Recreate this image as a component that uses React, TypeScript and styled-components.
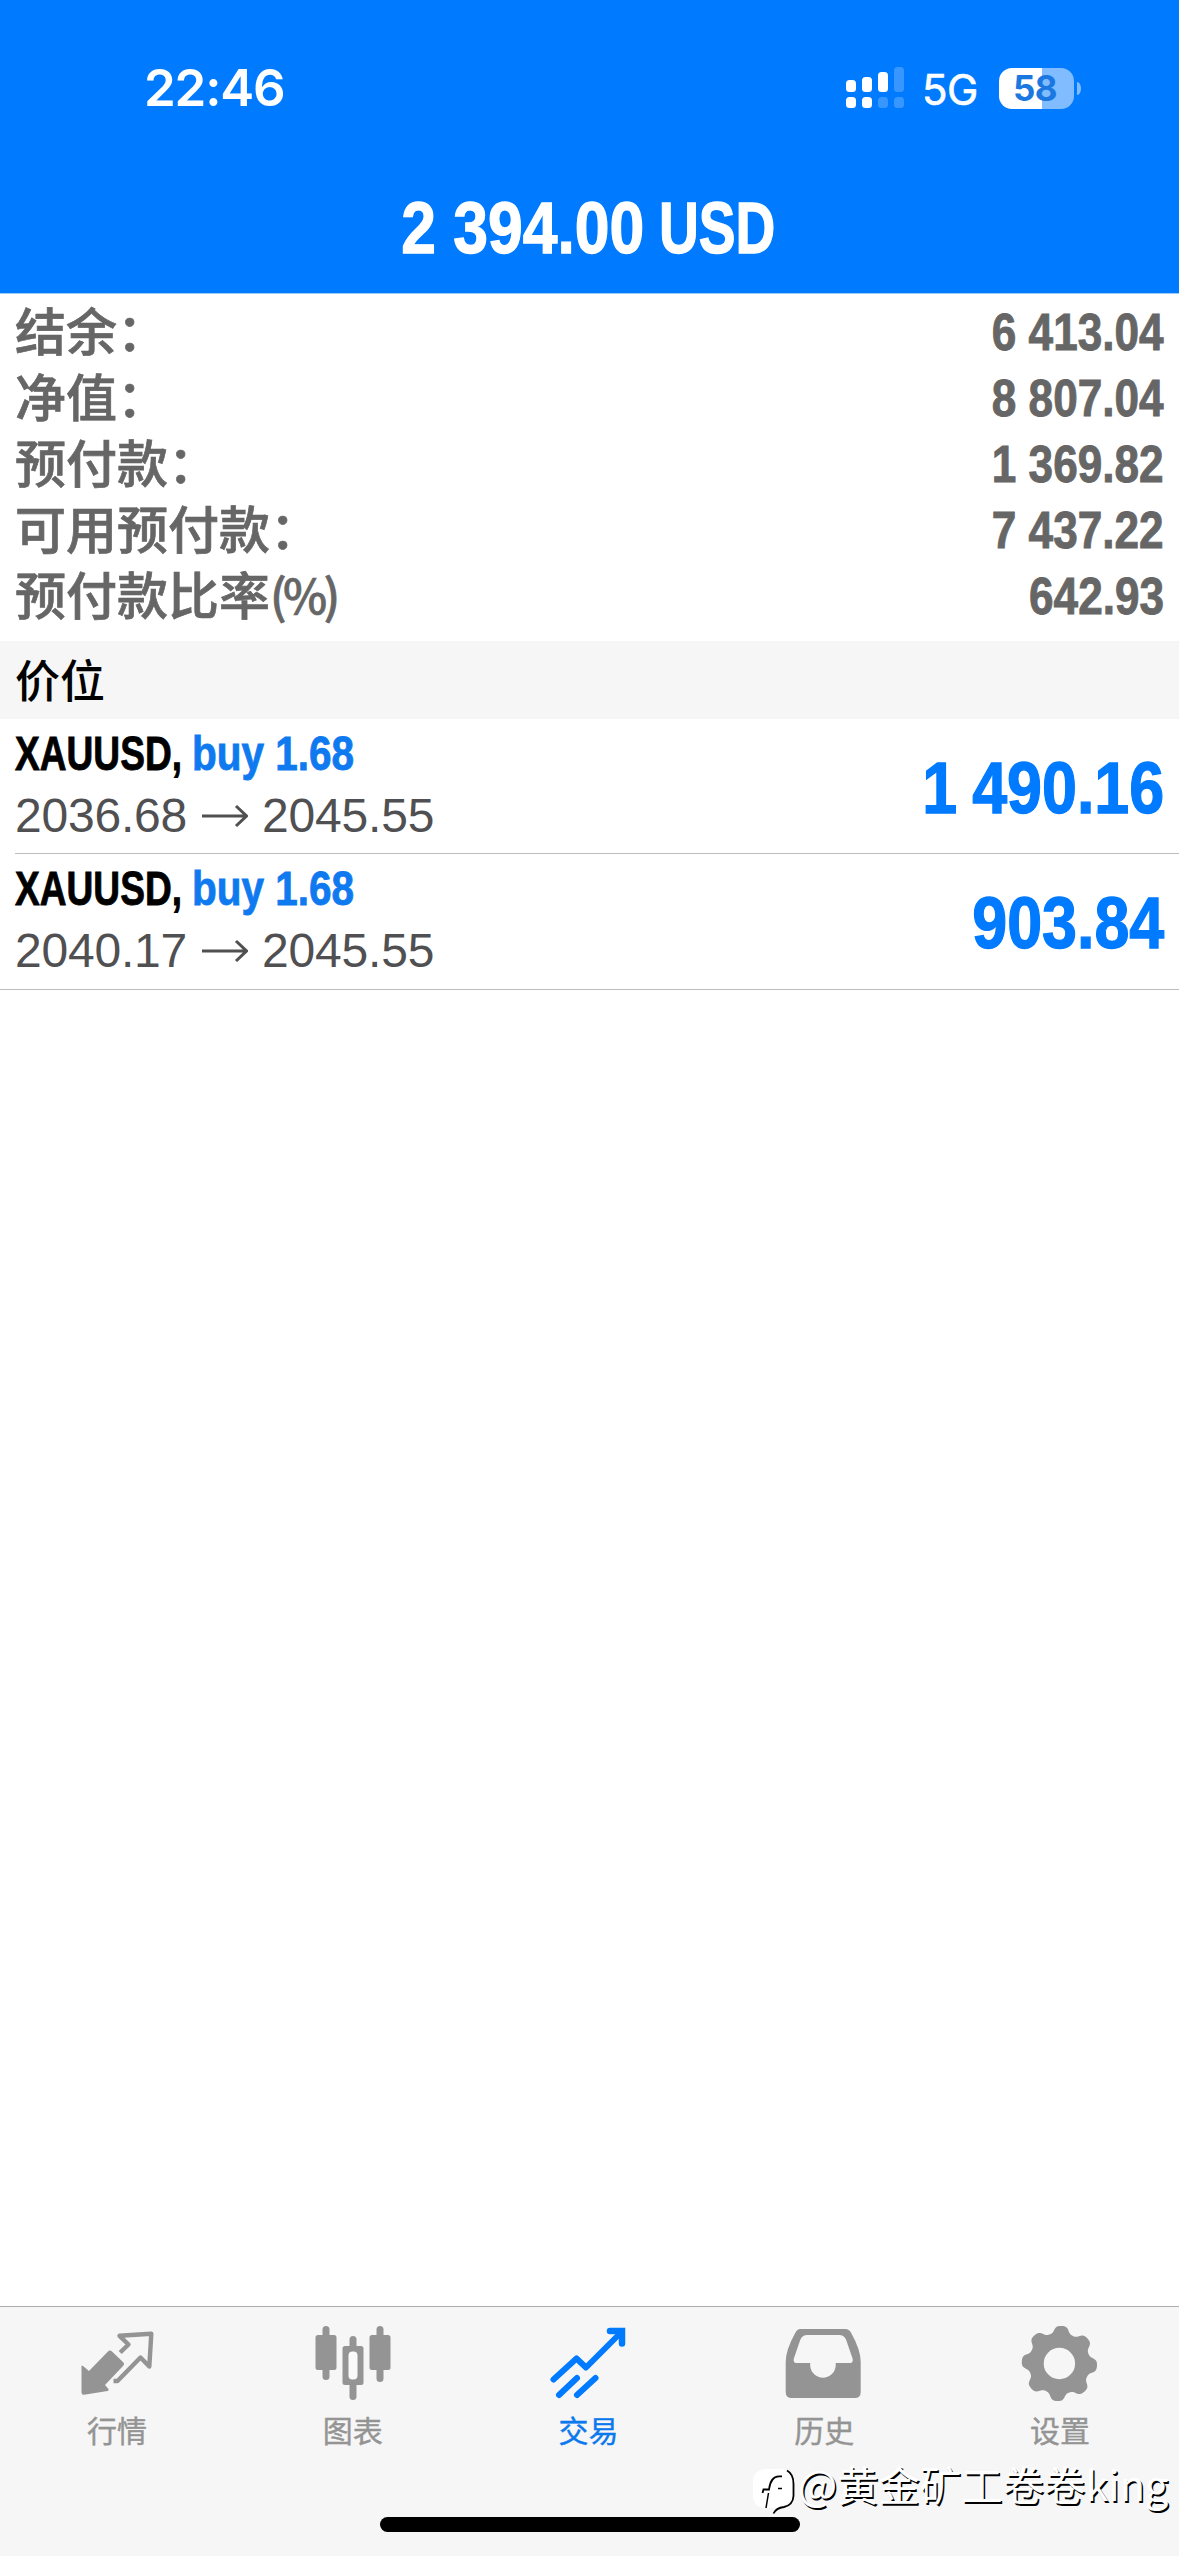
import React from "react";
import styled, { createGlobalStyle } from "styled-components";

const sans = `"Liberation Sans", Arial, "Noto Sans CJK SC", sans-serif`;
const cjk = `"Noto Sans CJK SC", "Liberation Sans", sans-serif`;
const system = `Inter, "Liberation Sans", sans-serif`;

const GlobalStyle = createGlobalStyle`
  * { box-sizing: border-box; }
  body { margin: 0; background: #fff; }
`;

const Screen = styled.div`
  width: 1179px;
  height: 2556px;
  display: flex;
  flex-direction: column;
  position: relative;
  overflow: hidden;
  background: #fff;
  font-family: ${sans};
`;

const Header = styled.header`
  height: 294px;
  background: #007aff;
  border-bottom: 1px solid #9bcbf8;
  display: flex;
  flex-direction: column;
  color: #fff;
`;

const StatusBar = styled.div`
  height: 176px;
  padding: 0 98px 0 144px;
  display: flex;
  align-items: center;
  justify-content: space-between;
`;

const Clock = styled.span`
  font: 600 51px/60px ${system};
  letter-spacing: -1.2px;
`;

const StatusRight = styled.div`
  display: flex;
  align-items: center;
`;

const Network = styled.span`
  width: 77px;
  margin-left: 16px;
  font: 400 42px/50px ${system};
  letter-spacing: -0.5px;
  margin-top: 3px;
  -webkit-text-stroke: 0.6px #fff;
`;

const Battery = styled.span`
  width: 75px;
  height: 41px;
  border-radius: 13px;
  background: linear-gradient(90deg, #fff 57%, #80bcff 57%);
  color: #1b78e0;
  font: 700 35px/41px ${system};
  letter-spacing: -0.5px;
  text-align: center;
  padding-right: 3px;
`;

const BatteryTip = styled.span`
  width: 4px;
  height: 13px;
  margin-left: 3px;
  border-radius: 0 4px 4px 0 / 0 7px 7px 0;
  background: #80bcff;
`;

const Condensed = styled.span<{ $size: number; $scale: number; $origin?: string; $width?: number; $color?: string }>`
  display: inline-block;
  white-space: pre;
  font: 700 ${(p) => p.$size}px/1.15 ${sans};
  -webkit-text-stroke: ${(p) => p.$size * 0.018}px currentColor;
  transform: scaleX(${(p) => p.$scale});
  transform-origin: ${(p) => p.$origin ?? "left"} center;
  ${(p) => (p.$width ? `width: ${p.$width}px;` : "")}
  ${(p) => (p.$color ? `color: ${p.$color};` : "")}
`;

const TitleRow = styled.div`
  height: 104px;
  padding-right: 6px;
  display: flex;
  justify-content: center;
  align-items: center;
  gap: 15px;
`;

const Summary = styled.section`
  height: 347px;
  padding: 5px 15px 0 15px;
  color: #666;
`;

const SummaryRow = styled.div`
  height: 66px;
  display: flex;
  justify-content: space-between;
  align-items: center;
  > :last-child { margin-top: 3px; }
`;

const SummaryLabel = styled.span`
  font: 500 51px/69px ${sans};
  height: 66px;
  -webkit-text-stroke: 0.7px currentColor;
`;

const Unit = styled.span`
  font: 500 47px/0 ${cjk};
  letter-spacing: -3.7px;
  vertical-align: 1px;
`;

const SectionTitle = styled.h2`
  margin: 0;
  height: 78px;
  padding-left: 15px;
  background: #f6f6f6;
  color: #000;
  font: 500 45px/75px ${cjk};
`;

const Position = styled.div`
  height: 135px;
  margin-left: 15px;
  padding: 4px 15px 0 0;
  display: flex;
  justify-content: space-between;
  border-bottom: 1px solid #bebec0;
  &:last-child {
    height: 136px;
    margin-left: 0;
    padding-left: 15px;
  }
`;

const Details = styled.div`
  display: flex;
  flex-direction: column;
`;

const Line = styled.div`
  height: 62px;
  display: flex;
  align-items: center;
`;

const Price = styled.span`
  font-size: 48px;
  letter-spacing: -0.2px;
  line-height: 56px;
  color: #505052;
`;

const Arrow = styled.svg`
  width: 46px;
  height: 24px;
  margin: 0 14px 0 15px;
  fill: none;
  stroke: #505052;
  stroke-width: 3;
`;

const Profit = styled.div`
  height: 129px;
  display: flex;
  align-items: center;
  color: #007aff;
  word-spacing: -3px;
`;

const TabBar = styled.nav`
  height: 250px;
  margin-top: auto;
  border-top: 1px solid #acacac;
  background: #f6f6f6;
  display: grid;
  grid-template-columns: repeat(5, 1fr);
`;

const Tab = styled.div<{ $active?: boolean }>`
  display: flex;
  flex-direction: column;
  align-items: center;
  padding-top: 6px;
  color: ${(p) => (p.$active ? "#0b78ee" : "#949494")};
  svg { width: 80px; height: 90px; }
`;

const TabLabel = styled.span`
  margin-top: 4px;
  padding-right: 2px;
  font: 400 30px/44px ${cjk};
  -webkit-text-stroke: 0.4px currentColor;
`;

const HomeIndicator = styled.div`
  position: absolute;
  left: 380px;
  top: 2517px;
  width: 420px;
  height: 15px;
  border-radius: 8px;
  background: #000;
`;

const Watermark = styled.div`
  position: absolute;
  left: 752px;
  top: 2464px;
  height: 52px;
  display: flex;
  align-items: flex-start;
  color: #fff;
  white-space: nowrap;
  font: 400 41.4px/39px ${cjk};
  text-shadow: 1.5px 1.5px 0 #000;
  svg { width: 46px; height: 52px; }
`;

const summary = [
  { label: "结余：", value: "6 413.04" },
  { label: "净值：", value: "8 807.04" },
  { label: "预付款：", value: "1 369.82" },
  { label: "可用预付款：", value: "7 437.22" },
  { label: "预付款比率", unit: "(%)", value: "642.93" },
];

const positions = [
  { open: "2036.68", now: "2045.55", profit: "1 490.16" },
  { open: "2040.17", now: "2045.55", profit: "903.84" },
];

const Signal = () => (
  <svg width="60" height="42" viewBox="0 0 60 42" fill="#fff">
    <rect x="0" y="13" width="10" height="12" rx="3.5" />
    <rect x="16" y="10" width="10" height="15" rx="3.5" />
    <rect x="32" y="5" width="10" height="20" rx="3.5" />
    <rect x="48" y="0" width="10" height="25" rx="3.5" opacity=".22" />
    <rect x="0" y="30" width="10" height="11" rx="3.5" />
    <rect x="16" y="30" width="10" height="11" rx="3.5" />
    <rect x="32" y="30" width="10" height="11" rx="3.5" opacity=".22" />
    <rect x="48" y="30" width="10" height="11" rx="3.5" opacity=".22" />
  </svg>
);

const QuotesIcon = () => (
  <svg viewBox="0 0 80 90">
    <path
      d="M3.500 53 Q4 52 5 53 L11 58 L30 38.500 Q32 36.300 34 38.500 L45 49 Q47 51 45 53 L27 72 L30.500 76 Q31 77.800 29.500 78 L6 81.800 Q3.500 82 3.500 79.500 Z"
      fill="currentColor"
    />
    <path
      d="M42.200 39.500 L50.500 31.500 L41.500 22.800 L73.300 20.800 L71.300 53.500 L62.500 44.500 L39.500 68 H35.500"
      fill="none"
      stroke="currentColor"
      strokeWidth="4.400"
      strokeLinejoin="round"
    />
  </svg>
);

const ChartIcon = () => (
  <svg viewBox="0 0 80 90" fill="currentColor">
    <g transform="translate(-1 0)">
      <rect x="9.500" y="13" width="7" height="54" rx="3.500" />
      <rect x="2.500" y="22" width="21" height="35" rx="2.500" />
      <rect x="63.500" y="13" width="7" height="56" rx="3.500" />
      <rect x="56.500" y="22" width="21" height="35" rx="2.500" />
      <rect x="36.500" y="23" width="7" height="64" rx="3.500" />
      <rect x="29.500" y="33" width="21" height="39" rx="2.500" />
      <rect x="35.500" y="38.500" width="9" height="28" rx="4" fill="#f9f9f9" />
    </g>
  </svg>
);

const TradeIcon = () => (
  <svg viewBox="0 0 80 90" fill="none" stroke="#007aff" strokeWidth="6" strokeLinecap="round">
    <path d="M4.500 66.500 L27.500 45.500 L37 54.500 L72 19.500" strokeLinejoin="round" />
    <path d="M61 18 H73 V30.500" strokeWidth="6.500" />
    <path d="M10 82 L28 65 M28 82 L46.500 65" />
  </svg>
);

const HistoryIcon = () => (
  <svg viewBox="0 0 80 90">
    <path
      transform="translate(-1.800 0)"
      fill="currentColor"
      fillRule="evenodd"
      d="M17 16 H62 Q66 16 68 20 Q77.500 37 77.500 49 V79 Q77.500 85 71.500 85 H8.500 Q2.500 85 2.500 79 V49 Q2.500 37 12 20 Q14 16 17 16 Z M24 22 Q19 22 17 27 L10.500 46 Q10 50 13 50 H27 V53 A12.800 12.800 0 0 0 52.500 53 V50 H67 Q70 50 69.500 46 L63 27 Q61 22 56 22 Z"
    />
  </svg>
);

const gearOutline = (() => {
  const points: string[] = [];
  const steps = 192;
  for (let i = 0; i < steps; i++) {
    const angle = (i / steps) * Math.PI * 2;
    const wave = Math.cos(8 * (angle + Math.PI / 2 - 0.06));
    const radius = 34 + 3.9 * Math.tanh(1.5 * wave + 0.2);
    points.push(`${(40 + radius * Math.cos(angle)).toFixed(2)} ${(40 + radius * Math.sin(angle)).toFixed(2)}`);
  }
  return `M${points.join("L")}Z`;
})();

const GearIcon = () => (
  <svg viewBox="0 0 80 90">
    <path
      transform="translate(-1.600 10.500)"
      fill="currentColor"
      fillRule="evenodd"
      d={`${gearOutline} M24.300 40 a15.700 15.700 0 1 0 31.400 0 a15.700 15.700 0 1 0 -31.400 0Z`}
    />
  </svg>
);

const tabs = [
  { label: "行情", Icon: QuotesIcon },
  { label: "图表", Icon: ChartIcon },
  { label: "交易", Icon: TradeIcon, active: true },
  { label: "历史", Icon: HistoryIcon },
  { label: "设置", Icon: GearIcon },
];

const WatermarkLogo = () => (
  <svg viewBox="0 0 46 52">
    <path
      d="M15 5 H28 Q41 5 41 18 V31 Q41 42 30 44 L22 48 L23 44 H14 Q1 44 1 31 V19 Q1 5 15 5Z"
      fill="#fff"
    />
    <path d="M35 6.500 Q41.500 10 41.500 20 V32 Q41 41 32 43 Q24 44 21.500 49.500" fill="none" stroke="#000" strokeWidth="1.800" />
    <path d="M10.500 29 L11.500 25.500 H17 Q18.500 12.500 27 12.300 H30" fill="none" stroke="#000" strokeWidth="1.800" />
    <path d="M16.500 29 L14 44 M26 24.500 H30" fill="none" stroke="#000" strokeWidth="1.500" />
  </svg>
);

export default function App() {
  return (
    <Screen>
      <GlobalStyle />
      <Header>
        <StatusBar>
          <Clock>22:46</Clock>
          <StatusRight>
            <Signal />
            <Network>5G</Network>
            <Battery>58</Battery>
            <BatteryTip />
          </StatusRight>
        </StatusBar>
        <TitleRow>
          <Condensed $size={73} $scale={0.855} $origin="right">2 394.00</Condensed>
          <Condensed $size={73} $scale={0.755}>USD</Condensed>
        </TitleRow>
      </Header>
      <Summary>
        {summary.map(({ label, unit, value }) => (
          <SummaryRow key={label}>
            <SummaryLabel>
              {label}
              {unit && <Unit>{unit}</Unit>}
            </SummaryLabel>
            <Condensed $size={51} $scale={0.865} $origin="right">{value}</Condensed>
          </SummaryRow>
        ))}
      </Summary>
      <SectionTitle>价位</SectionTitle>
      <main>
        {positions.map((p) => (
          <Position key={p.open}>
            <Details>
              <Line>
                <Condensed $size={48.5} $scale={0.765} $width={177} $color="#000">XAUUSD,</Condensed>
                <Condensed $size={48.5} $scale={0.835} $color="#0f7af0">buy 1.68</Condensed>
              </Line>
              <Line>
                <Price>{p.open}</Price>
                <Arrow viewBox="0 0 46 24">
                  <path d="M0 12 H44 M34 2 L44.500 12 L34 22" />
                </Arrow>
                <Price>{p.now}</Price>
              </Line>
            </Details>
            <Profit>
              <Condensed $size={73} $scale={0.86} $origin="right">{p.profit}</Condensed>
            </Profit>
          </Position>
        ))}
      </main>
      <TabBar>
        {tabs.map(({ label, Icon, active }) => (
          <Tab key={label} $active={active}>
            <Icon />
            <TabLabel>{label}</TabLabel>
          </Tab>
        ))}
      </TabBar>
      <HomeIndicator />
      <Watermark>
        <WatermarkLogo />
        <span>@黄金矿工卷卷king</span>
      </Watermark>
    </Screen>
  );
}
